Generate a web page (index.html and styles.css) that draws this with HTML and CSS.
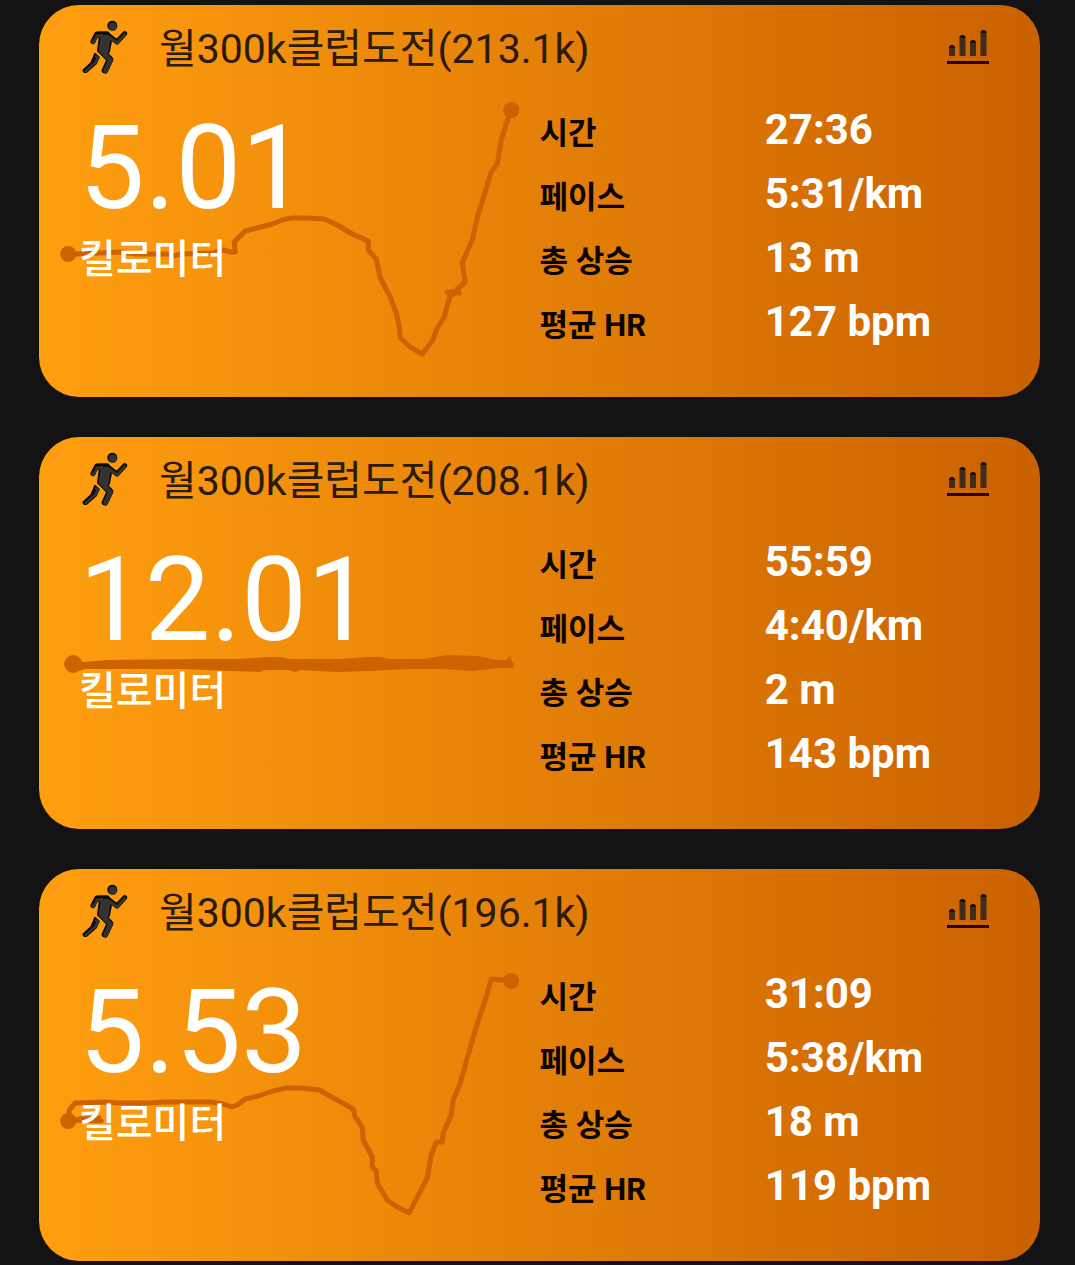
FILE: index.html
```html
<!DOCTYPE html>
<html lang="ko">
<head>
  <meta charset="UTF-8">
  <meta name="viewport" content="width=device-width, initial-scale=1">
  <title>월300k클럽도전</title>
  <link rel="stylesheet" href="styles.css">
</head>
<body>
  <!-- shared icons -->
  <svg class="defs" width="0" height="0" aria-hidden="true">
    <symbol id="runner" viewBox="158 58 136 162">
      <g fill="#0c0a08" stroke="#0c0a08" stroke-linecap="round" stroke-linejoin="round">
        <circle cx="248" cy="75" r="15" stroke="none"/>
        <path d="M206 99 L234 100 L243 110 L235 152 L208 150 L213 112Z" stroke-width="12"/>
        <path d="M190 123 L201 100 L232 99 M238 106 L262 124 L285 99" fill="none" stroke-width="15"/>
        <path d="M215 150 L241 177 L226 209" fill="none" stroke-width="20"/>
        <path d="M196 159 L208 170 L199 189 L171 214 Q161 217 161 208 L185 186Z" stroke-width="5"/>
      </g>
      <g fill="#353330" stroke="#353330" stroke-linecap="round" stroke-linejoin="round">
        <circle cx="249" cy="78" r="12" stroke="none"/>
        <path d="M212 107 L233 107 L238 115 L232 152 L211 149 L218 113Z" stroke-width="10"/>
        <path d="M191 125 L203 105 L218 104 M240 111 L262 127 L286 102" fill="none" stroke-width="9"/>
        <path d="M219 154 L242 179 L228 210" fill="none" stroke-width="14"/>
        <path d="M200 167 L204 172 L196 187 L168 211" fill="none" stroke-width="8"/>
      </g>
    </symbol>
    <symbol id="bars" viewBox="0 0 42 36">
      <path d="M5 27V18 M15.500 27V8 M26 27V13 M36.500 27V3" fill="none" stroke="#3f2c19" stroke-width="6"/>
      <path d="M2 19a3 3 0 0 1 6 0z M12.500 9a3 3 0 0 1 6 0z M23 14a3 3 0 0 1 6 0z M33.500 4a3 3 0 0 1 6 0z" fill="#1c0c02"/>
      <path d="M0 33.500H42" stroke="#220204" stroke-width="3"/>
    </symbol>
  </svg>

  <main class="feed">
    <article class="card">
      <svg class="route" viewBox="0 0 500 392" aria-hidden="true">
        <path d="M29 249 L38 249 81 247 96 249 128 249 134 251 142 249 174 248 184 245 192 247 196 247 195 237 206 226 218 223 233 219 243 215 252 213 268 213 285 214 298 220 313 229 329 236 329 245 337 254 341 273 351 292 357 308 360 322 361 333 371 342 383 349 393 336 398 323 405 312 411 290 408 287 420 288 418 284 426 277 423 258 433 235 438 213 447 183 452 167 458 159 462 135 470 110 472 105"/>
        <circle cx="29" cy="249" r="8"/>
        <circle cx="472" cy="105" r="8"/>
        <circle cx="413" cy="288" r="4"/>
      </svg>
      <header class="card-header">
        <svg class="runner"><use href="#runner"/></svg>
        <h2>월300k클럽도전(213.1k)</h2>
        <button type="button" class="chart-button" aria-label="통계"><svg><use href="#bars"/></svg></button>
      </header>
      <div class="card-body">
        <p class="distance">
          <span class="number">5.01</span>
          <span class="unit">킬로미터</span>
        </p>
        <dl class="stats">
          <dt>시간</dt><dd>27:36</dd>
          <dt>페이스</dt><dd>5:31/km</dd>
          <dt>총 상승</dt><dd>13 m</dd>
          <dt>평균 HR</dt><dd>127 bpm</dd>
        </dl>
      </div>
    </article>

    <article class="card">
      <svg class="route" viewBox="0 0 500 392" aria-hidden="true">
        <polygon points="40,223 45,225 68,223 154,222 198,222 230,220 241,220 251,222 298,222 330,220 341,220 351,222 384,222 395,220 408,218 438,219 458,223 467,223 471,218 472,223 475,227 474,231 461,231 434,234 404,232 371,232 330,234 298,235 262,233 256,235 249,233 225,233 221,235 191,234 144,232 45,232 40,234"/>
        <circle cx="34" cy="227" r="9"/>
      </svg>
      <header class="card-header">
        <svg class="runner"><use href="#runner"/></svg>
        <h2>월300k클럽도전(208.1k)</h2>
        <button type="button" class="chart-button" aria-label="통계"><svg><use href="#bars"/></svg></button>
      </header>
      <div class="card-body">
        <p class="distance">
          <span class="number">12.01</span>
          <span class="unit">킬로미터</span>
        </p>
        <dl class="stats">
          <dt>시간</dt><dd>55:59</dd>
          <dt>페이스</dt><dd>4:40/km</dd>
          <dt>총 상승</dt><dd>2 m</dd>
          <dt>평균 HR</dt><dd>143 bpm</dd>
        </dl>
      </div>
    </article>

    <article class="card">
      <svg class="route" viewBox="0 0 500 392" aria-hidden="true">
        <path d="M62 249 L40 250 62 252 36 251 29 252 30 241 36 234 66 233 80 234 110 234 124 233 171 233 184 235 192 238 198 236 206 230 219 227 234 222 247 219 263 219 280 221 294 229 314 240 316 248 323 258 324 271 333 288 333 298 337 302 338 314 348 331 358 338 370 344 378 328 388 309 392 286 397 273 403 273 404 264 412 246 414 231 421 214 436 161 447 128 452 110 472 112"/>
        <circle cx="29" cy="252" r="8"/>
        <circle cx="472" cy="112" r="8"/>
      </svg>
      <header class="card-header">
        <svg class="runner"><use href="#runner"/></svg>
        <h2>월300k클럽도전(196.1k)</h2>
        <button type="button" class="chart-button" aria-label="통계"><svg><use href="#bars"/></svg></button>
      </header>
      <div class="card-body">
        <p class="distance">
          <span class="number">5.53</span>
          <span class="unit">킬로미터</span>
        </p>
        <dl class="stats">
          <dt>시간</dt><dd>31:09</dd>
          <dt>페이스</dt><dd>5:38/km</dd>
          <dt>총 상승</dt><dd>18 m</dd>
          <dt>평균 HR</dt><dd>119 bpm</dd>
        </dl>
      </div>
    </article>
  </main>
</body>
</html>
```
FILE: styles.css
```css
* {
  box-sizing: border-box;
}
body {
  margin: 0;
  background: #131313;
  font-family: Roboto, "Noto Sans CJK KR", sans-serif;
}
h2, p, dl, dd {
  margin: 0;
}
.defs {
  position: absolute;
}
.feed {
  display: flex;
  flex-direction: column;
  gap: 40px;
  padding: 5px 35px 4px 39px;
}
.card {
  position: relative;
  padding-bottom: 44px;
  border-radius: 40px;
  background: linear-gradient(to right, #ff9f0f, #ca6100);
}

/* GPS trace, drawn behind the text */
.route {
  position: absolute;
  top: 0;
  left: 0;
  width: 50%;
  height: 100%;
  fill: #cc6300;
}
.route path {
  fill: none;
  stroke: #cc6300;
  stroke-width: 5;
  stroke-linejoin: round;
}

.card-header {
  position: relative;
  display: flex;
  align-items: center;
  height: 84px;
  padding: 0 51px 0 43px;
}
.card-header h2 {
  flex: 1;
  margin-left: 31px;
  padding-top: 4px;
  font-size: 41px;
  font-weight: 400;
  line-height: 48px;
  color: #2b1a08;
}
.runner {
  width: 46px;
  height: 54px;
}
.chart-button {
  padding: 0;
  border: none;
  background: none;
  cursor: pointer;
}
.chart-button svg {
  display: block;
  width: 42px;
  height: 36px;
}

.card-body {
  position: relative;
  display: grid;
  grid-template-columns: 1fr 1fr;
  padding-top: 8px;
}
.distance {
  padding: 3px 0 0 40px;
  color: #fff;
}
.number, .unit {
  display: block;
}
.number {
  font-size: 117px;
  line-height: 136px;
}
.unit {
  font-size: 40px;
  font-weight: 500;
  line-height: 48px;
}
.stats {
  display: grid;
  grid-template-columns: 45% 1fr;
  grid-auto-rows: 64px;
  align-items: center;
  font-weight: 700;
}
.stats dt {
  padding-top: 2px;
  font-size: 31px;
  color: #0d0400;
}
.stats dd {
  font-size: 42px;
  color: #fff;
}
```
